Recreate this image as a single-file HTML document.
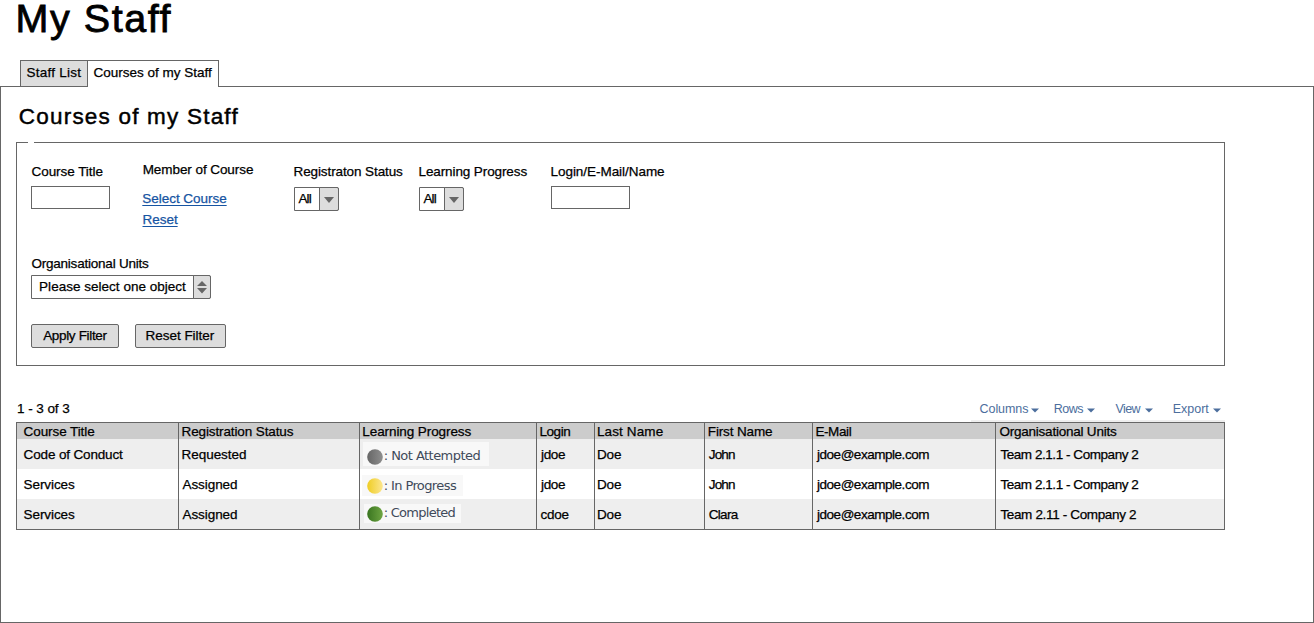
<!DOCTYPE html>
<html lang="en"><head><meta charset="utf-8"><title>My Staff</title>
<style>
html,body{margin:0;padding:0;background:#fff;}
body{width:1314px;height:623px;position:relative;overflow:hidden;font-family:"Liberation Sans", sans-serif;}
.t{position:absolute;white-space:pre;}
.b{position:absolute;box-sizing:border-box;}
.ul{text-decoration:underline;text-decoration-thickness:1px;text-underline-offset:2px;}
</style></head><body>
<!-- main panel -->
<div class="b" style="left:0;top:86px;width:1314px;height:537px;border:1px solid #666;background:#fff;"></div>
<!-- tabs -->
<div class="b" style="left:20px;top:60px;width:68px;height:27px;border:1px solid #666;background:#ddd;"></div>
<div class="b" style="left:87px;top:60px;width:132px;height:27px;border:1px solid #666;border-bottom:none;background:#fff;"></div>
<!-- fieldset -->
<div class="b" style="left:16px;top:142px;width:1209px;height:224px;border:1px solid #666;"></div>
<div class="b" style="left:28px;top:142px;width:6px;height:1px;background:#fff;"></div>
<!-- inputs -->
<div class="b" style="left:31px;top:186px;width:79px;height:23px;border:1px solid #666;background:#fff;"></div>
<div class="b" style="left:551px;top:186px;width:79px;height:23px;border:1px solid #666;background:#fff;"></div>
<!-- selects -->
<div class="b" style="left:294px;top:187px;width:45px;height:24px;border:1px solid #666;background:#fff;border-radius:0 2px 2px 0;"></div>
<div class="b" style="left:319px;top:187px;width:20px;height:24px;border:1px solid #666;background:#ddd;border-radius:0 2px 2px 0;"></div>
<svg class="b" style="left:323px;top:196px;" width="12" height="8" viewBox="0 0 12 8"><path d="M1 1 L11 1 L6 7 Z" fill="#666"/></svg>
<div class="b" style="left:419px;top:187px;width:45px;height:24px;border:1px solid #666;background:#fff;border-radius:0 2px 2px 0;"></div>
<div class="b" style="left:444px;top:187px;width:20px;height:24px;border:1px solid #666;background:#ddd;border-radius:0 2px 2px 0;"></div>
<svg class="b" style="left:448px;top:196px;" width="12" height="8" viewBox="0 0 12 8"><path d="M1 1 L11 1 L6 7 Z" fill="#666"/></svg>
<!-- org unit select -->
<div class="b" style="left:31px;top:275px;width:180px;height:24px;border:1px solid #666;background:#fff;border-radius:0 2px 2px 0;"></div>
<div class="b" style="left:193px;top:275px;width:18px;height:24px;border:1px solid #666;background:#ddd;border-radius:0 2px 2px 0;"></div>
<svg class="b" style="left:196px;top:280px;" width="12" height="14" viewBox="0 0 12 14"><path d="M1 6 L11 6 L6 1 Z M1 8 L11 8 L6 13.5 Z" fill="#666"/></svg>
<!-- buttons -->
<div class="b" style="left:31px;top:324px;width:88px;height:24px;border:1px solid #666;background:#ddd;border-radius:2px;"></div>
<div class="b" style="left:135px;top:324px;width:91px;height:24px;border:1px solid #666;background:#ddd;border-radius:2px;"></div>
<!-- toolbar strip -->
<div class="b" style="left:971px;top:420px;width:254px;height:2px;background:#efefef;"></div>
<svg class="b" style="left:1031px;top:408px;" width="8" height="5" viewBox="0 0 8 5"><path d="M0 0.5 L8 0.5 L4 4.5 Z" fill="#4c6e9d"/></svg>
<svg class="b" style="left:1087px;top:408px;" width="8" height="5" viewBox="0 0 8 5"><path d="M0 0.5 L8 0.5 L4 4.5 Z" fill="#4c6e9d"/></svg>
<svg class="b" style="left:1145px;top:408px;" width="8" height="5" viewBox="0 0 8 5"><path d="M0 0.5 L8 0.5 L4 4.5 Z" fill="#4c6e9d"/></svg>
<svg class="b" style="left:1213px;top:408px;" width="8" height="5" viewBox="0 0 8 5"><path d="M0 0.5 L8 0.5 L4 4.5 Z" fill="#4c6e9d"/></svg>
<!-- table -->
<div class="b" style="left:16px;top:422px;width:1209px;height:108px;border:1px solid #666;background:#fff;"></div>
<div class="b" style="left:17px;top:423px;width:1207px;height:16px;background:#ccc;"></div>
<div class="b" style="left:17px;top:439px;width:1207px;height:30px;background:#eee;"></div>
<div class="b" style="left:17px;top:499px;width:1207px;height:30px;background:#eee;"></div>
<div class="b" style="left:178px;top:423px;width:1px;height:106px;background:#666;"></div>
<div class="b" style="left:359px;top:423px;width:1px;height:106px;background:#666;"></div>
<div class="b" style="left:536px;top:423px;width:1px;height:106px;background:#666;"></div>
<div class="b" style="left:594px;top:423px;width:1px;height:106px;background:#666;"></div>
<div class="b" style="left:704px;top:423px;width:1px;height:106px;background:#666;"></div>
<div class="b" style="left:812px;top:423px;width:1px;height:106px;background:#666;"></div>
<div class="b" style="left:995px;top:423px;width:1px;height:106px;background:#666;"></div>
<!-- learning progress chips -->
<div class="b" style="left:363px;top:442px;width:126px;height:24px;background:#f8f8f8;"></div>
<div class="b" style="left:362px;top:475px;width:101px;height:21px;background:#f8f8f8;"></div>
<div class="b" style="left:364px;top:504px;width:97px;height:19px;background:#f8f8f8;"></div>
<svg class="b" style="left:366px;top:448px;" width="18" height="18" viewBox="0 0 18 18"><defs><linearGradient id="gg" x1="0" x2="1" y1="0" y2="0"><stop offset="0" stop-color="#666"/><stop offset="1" stop-color="#8e8e8e"/></linearGradient></defs><circle cx="9" cy="9" r="7.8" fill="url(#gg)"/></svg>
<svg class="b" style="left:366px;top:477px;" width="18" height="18" viewBox="0 0 18 18"><defs><linearGradient id="gy" x1="0" x2="1" y1="0" y2="0"><stop offset="0" stop-color="#efcd24"/><stop offset="1" stop-color="#fce68f"/></linearGradient></defs><circle cx="9" cy="9" r="7.8" fill="url(#gy)"/></svg>
<svg class="b" style="left:366px;top:505px;" width="18" height="18" viewBox="0 0 18 18"><defs><linearGradient id="gn" x1="0" x2="1" y1="0" y2="0"><stop offset="0" stop-color="#3a7520"/><stop offset="1" stop-color="#6da542"/></linearGradient></defs><circle cx="9" cy="9" r="7.8" fill="url(#gn)"/></svg>

<span class="t" style='left:15.50px;top:-11px;font-size:39.5px;line-height:59px;letter-spacing:1.546px;color:#000;font-family:"Liberation Sans", sans-serif;-webkit-text-stroke:0.8px #000;'>My Staff</span>
<span class="t" style='left:26.50px;top:63px;font-size:13.5px;line-height:20px;letter-spacing:0.252px;color:#000;font-family:"Liberation Sans", sans-serif;-webkit-text-stroke:0.25px #000;'>Staff List</span>
<span class="t" style='left:93.50px;top:63px;font-size:13.5px;line-height:20px;letter-spacing:-0.008px;color:#000;font-family:"Liberation Sans", sans-serif;-webkit-text-stroke:0.25px #000;'>Courses of my Staff</span>
<span class="t" style='left:18.80px;top:100px;font-size:22.5px;line-height:34px;letter-spacing:1.205px;color:#000;font-family:"Liberation Sans", sans-serif;-webkit-text-stroke:0.45px #000;'>Courses of my Staff</span>
<span class="t" style='left:31.50px;top:162px;font-size:13.5px;line-height:20px;letter-spacing:-0.051px;color:#000;font-family:"Liberation Sans", sans-serif;-webkit-text-stroke:0.25px #000;'>Course Title</span>
<span class="t" style='left:142.70px;top:160px;font-size:13.5px;line-height:20px;letter-spacing:-0.072px;color:#000;font-family:"Liberation Sans", sans-serif;-webkit-text-stroke:0.25px #000;'>Member of Course</span>
<span class="t ul" style='left:142.30px;top:189px;font-size:13.5px;line-height:20px;letter-spacing:-0.032px;color:#1654a2;font-family:"Liberation Sans", sans-serif;-webkit-text-stroke:0.25px #1654a2;'>Select Course</span>
<span class="t ul" style='left:142.50px;top:210px;font-size:13.5px;line-height:20px;letter-spacing:-0.029px;color:#1654a2;font-family:"Liberation Sans", sans-serif;-webkit-text-stroke:0.25px #1654a2;'>Reset</span>
<span class="t" style='left:293.50px;top:162px;font-size:13.5px;line-height:20px;letter-spacing:-0.101px;color:#000;font-family:"Liberation Sans", sans-serif;-webkit-text-stroke:0.25px #000;'>Registraton Status</span>
<span class="t" style='left:298.50px;top:189px;font-size:13.5px;line-height:20px;letter-spacing:-0.902px;color:#000;font-family:"Liberation Sans", sans-serif;-webkit-text-stroke:0.25px #000;'>All</span>
<span class="t" style='left:418.50px;top:162px;font-size:13.5px;line-height:20px;letter-spacing:-0.104px;color:#000;font-family:"Liberation Sans", sans-serif;-webkit-text-stroke:0.25px #000;'>Learning Progress</span>
<span class="t" style='left:423.50px;top:189px;font-size:13.5px;line-height:20px;letter-spacing:-0.902px;color:#000;font-family:"Liberation Sans", sans-serif;-webkit-text-stroke:0.25px #000;'>All</span>
<span class="t" style='left:550.50px;top:162px;font-size:13.5px;line-height:20px;letter-spacing:-0.043px;color:#000;font-family:"Liberation Sans", sans-serif;-webkit-text-stroke:0.25px #000;'>Login/E-Mail/Name</span>
<span class="t" style='left:31.40px;top:254px;font-size:13.5px;line-height:20px;letter-spacing:-0.216px;color:#000;font-family:"Liberation Sans", sans-serif;-webkit-text-stroke:0.25px #000;'>Organisational Units</span>
<span class="t" style='left:39.10px;top:277px;font-size:13.5px;line-height:20px;letter-spacing:0.018px;color:#000;font-family:"Liberation Sans", sans-serif;-webkit-text-stroke:0.25px #000;'>Please select one object</span>
<span class="t" style='left:43.20px;top:326px;font-size:13.5px;line-height:20px;letter-spacing:-0.339px;color:#000;font-family:"Liberation Sans", sans-serif;-webkit-text-stroke:0.25px #000;'>Apply Filter</span>
<span class="t" style='left:145.50px;top:326px;font-size:13.5px;line-height:20px;letter-spacing:-0.020px;color:#000;font-family:"Liberation Sans", sans-serif;-webkit-text-stroke:0.25px #000;'>Reset Filter</span>
<span class="t" style='left:17.00px;top:399px;font-size:13.5px;line-height:20px;letter-spacing:-0.064px;color:#000;font-family:"Liberation Sans", sans-serif;-webkit-text-stroke:0.25px #000;'>1 - 3 of 3</span>
<span class="t" style='left:23.60px;top:422px;font-size:13.5px;line-height:20px;letter-spacing:-0.088px;color:#000;font-family:"Liberation Sans", sans-serif;-webkit-text-stroke:0.25px #000;'>Course Title</span>
<span class="t" style='left:181.50px;top:422px;font-size:13.5px;line-height:20px;letter-spacing:-0.117px;color:#000;font-family:"Liberation Sans", sans-serif;-webkit-text-stroke:0.25px #000;'>Registration Status</span>
<span class="t" style='left:362.30px;top:422px;font-size:13.5px;line-height:20px;letter-spacing:-0.085px;color:#000;font-family:"Liberation Sans", sans-serif;-webkit-text-stroke:0.25px #000;'>Learning Progress</span>
<span class="t" style='left:539.50px;top:422px;font-size:13.5px;line-height:20px;letter-spacing:-0.456px;color:#000;font-family:"Liberation Sans", sans-serif;-webkit-text-stroke:0.25px #000;'>Login</span>
<span class="t" style='left:597.00px;top:422px;font-size:13.5px;line-height:20px;letter-spacing:0.116px;color:#000;font-family:"Liberation Sans", sans-serif;-webkit-text-stroke:0.25px #000;'>Last Name</span>
<span class="t" style='left:707.80px;top:422px;font-size:13.5px;line-height:20px;letter-spacing:-0.144px;color:#000;font-family:"Liberation Sans", sans-serif;-webkit-text-stroke:0.25px #000;'>First Name</span>
<span class="t" style='left:815.40px;top:422px;font-size:13.5px;line-height:20px;letter-spacing:-0.391px;color:#000;font-family:"Liberation Sans", sans-serif;-webkit-text-stroke:0.25px #000;'>E-Mail</span>
<span class="t" style='left:999.40px;top:422px;font-size:13.5px;line-height:20px;letter-spacing:-0.222px;color:#000;font-family:"Liberation Sans", sans-serif;-webkit-text-stroke:0.25px #000;'>Organisational Units</span>
<span class="t" style='left:23.60px;top:445px;font-size:13.5px;line-height:20px;letter-spacing:-0.148px;color:#000;font-family:"Liberation Sans", sans-serif;-webkit-text-stroke:0.25px #000;'>Code of Conduct</span>
<span class="t" style='left:23.60px;top:475px;font-size:13.5px;line-height:20px;letter-spacing:-0.088px;color:#000;font-family:"Liberation Sans", sans-serif;-webkit-text-stroke:0.25px #000;'>Services</span>
<span class="t" style='left:23.60px;top:505px;font-size:13.5px;line-height:20px;letter-spacing:-0.088px;color:#000;font-family:"Liberation Sans", sans-serif;-webkit-text-stroke:0.25px #000;'>Services</span>
<span class="t" style='left:181.50px;top:445px;font-size:13.5px;line-height:20px;letter-spacing:-0.036px;color:#000;font-family:"Liberation Sans", sans-serif;-webkit-text-stroke:0.25px #000;'>Requested</span>
<span class="t" style='left:182.50px;top:475px;font-size:13.5px;line-height:20px;letter-spacing:-0.075px;color:#000;font-family:"Liberation Sans", sans-serif;-webkit-text-stroke:0.25px #000;'>Assigned</span>
<span class="t" style='left:182.50px;top:505px;font-size:13.5px;line-height:20px;letter-spacing:-0.075px;color:#000;font-family:"Liberation Sans", sans-serif;-webkit-text-stroke:0.25px #000;'>Assigned</span>
<span class="t" style='left:541.00px;top:445px;font-size:13.5px;line-height:20px;letter-spacing:-0.338px;color:#000;font-family:"Liberation Sans", sans-serif;-webkit-text-stroke:0.25px #000;'>jdoe</span>
<span class="t" style='left:541.00px;top:475px;font-size:13.5px;line-height:20px;letter-spacing:-0.338px;color:#000;font-family:"Liberation Sans", sans-serif;-webkit-text-stroke:0.25px #000;'>jdoe</span>
<span class="t" style='left:540.50px;top:505px;font-size:13.5px;line-height:20px;letter-spacing:-0.289px;color:#000;font-family:"Liberation Sans", sans-serif;-webkit-text-stroke:0.25px #000;'>cdoe</span>
<span class="t" style='left:597.00px;top:445px;font-size:13.5px;line-height:20px;letter-spacing:-0.179px;color:#000;font-family:"Liberation Sans", sans-serif;-webkit-text-stroke:0.25px #000;'>Doe</span>
<span class="t" style='left:597.00px;top:475px;font-size:13.5px;line-height:20px;letter-spacing:-0.179px;color:#000;font-family:"Liberation Sans", sans-serif;-webkit-text-stroke:0.25px #000;'>Doe</span>
<span class="t" style='left:597.00px;top:505px;font-size:13.5px;line-height:20px;letter-spacing:-0.179px;color:#000;font-family:"Liberation Sans", sans-serif;-webkit-text-stroke:0.25px #000;'>Doe</span>
<span class="t" style='left:708.80px;top:445px;font-size:13.5px;line-height:20px;letter-spacing:-0.855px;color:#000;font-family:"Liberation Sans", sans-serif;-webkit-text-stroke:0.25px #000;'>John</span>
<span class="t" style='left:708.80px;top:475px;font-size:13.5px;line-height:20px;letter-spacing:-0.855px;color:#000;font-family:"Liberation Sans", sans-serif;-webkit-text-stroke:0.25px #000;'>John</span>
<span class="t" style='left:708.80px;top:505px;font-size:13.5px;line-height:20px;letter-spacing:-0.713px;color:#000;font-family:"Liberation Sans", sans-serif;-webkit-text-stroke:0.25px #000;'>Clara</span>
<span class="t" style='left:817.00px;top:445px;font-size:13.5px;line-height:20px;letter-spacing:-0.471px;color:#000;font-family:"Liberation Sans", sans-serif;-webkit-text-stroke:0.25px #000;'>jdoe@example.com</span>
<span class="t" style='left:817.00px;top:475px;font-size:13.5px;line-height:20px;letter-spacing:-0.471px;color:#000;font-family:"Liberation Sans", sans-serif;-webkit-text-stroke:0.25px #000;'>jdoe@example.com</span>
<span class="t" style='left:817.00px;top:505px;font-size:13.5px;line-height:20px;letter-spacing:-0.471px;color:#000;font-family:"Liberation Sans", sans-serif;-webkit-text-stroke:0.25px #000;'>jdoe@example.com</span>
<span class="t" style='left:1000.40px;top:445px;font-size:13.5px;line-height:20px;letter-spacing:-0.448px;color:#000;font-family:"Liberation Sans", sans-serif;-webkit-text-stroke:0.25px #000;'>Team 2.1.1 - Company 2</span>
<span class="t" style='left:1000.40px;top:475px;font-size:13.5px;line-height:20px;letter-spacing:-0.448px;color:#000;font-family:"Liberation Sans", sans-serif;-webkit-text-stroke:0.25px #000;'>Team 2.1.1 - Company 2</span>
<span class="t" style='left:1000.40px;top:505px;font-size:13.5px;line-height:20px;letter-spacing:-0.348px;color:#000;font-family:"Liberation Sans", sans-serif;-webkit-text-stroke:0.25px #000;'>Team 2.11 - Company 2</span>
<span class="t" style='left:383.70px;top:446px;font-size:13px;line-height:20px;letter-spacing:-0.535px;color:#3f4a5a;font-family:"DejaVu Sans", "Liberation Sans", sans-serif;'>: Not Attempted</span>
<span class="t" style='left:383.70px;top:476px;font-size:13px;line-height:20px;letter-spacing:-0.602px;color:#3f4a5a;font-family:"DejaVu Sans", "Liberation Sans", sans-serif;'>: In Progress</span>
<span class="t" style='left:383.70px;top:503px;font-size:13px;line-height:20px;letter-spacing:-0.726px;color:#3f4a5a;font-family:"DejaVu Sans", "Liberation Sans", sans-serif;'>: Completed</span>
<span class="t" style='left:979.60px;top:400px;font-size:12.5px;line-height:19px;letter-spacing:-0.079px;color:#4c6e9d;font-family:"Liberation Sans", sans-serif;'>Columns</span>
<span class="t" style='left:1053.80px;top:400px;font-size:12.5px;line-height:19px;letter-spacing:-0.535px;color:#4c6e9d;font-family:"Liberation Sans", sans-serif;'>Rows</span>
<span class="t" style='left:1115.60px;top:400px;font-size:12.5px;line-height:19px;letter-spacing:-0.647px;color:#4c6e9d;font-family:"Liberation Sans", sans-serif;'>View</span>
<span class="t" style='left:1172.70px;top:400px;font-size:12.5px;line-height:19px;letter-spacing:-0.011px;color:#4c6e9d;font-family:"Liberation Sans", sans-serif;'>Export</span>
</body></html>
